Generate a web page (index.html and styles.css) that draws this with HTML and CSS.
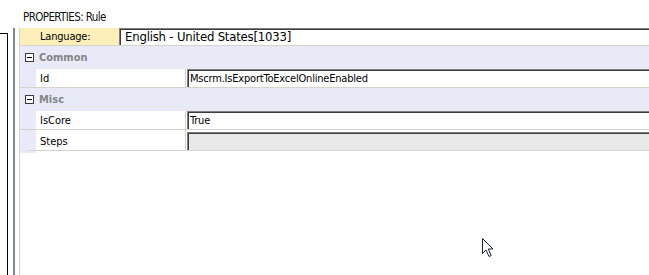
FILE: index.html
```html
<!DOCTYPE html>
<html lang="en">
<head>
    <meta charset="UTF-8">
    <title>Properties: Rule</title>
    <link rel="stylesheet" href="styles.css">
</head>
<body>
    <div class="title">PROPERTIES: Rule</div>
    <div class="main">
        <div class="frame-outer"></div>
        <div class="frame-bar"></div>
        <div class="panel">
            <div class="lang-row">
                <div class="lang-label">Language:</div>
                <div class="lang-value">English - United States[1033]</div>
            </div>

            <div class="cat">
                <span class="toggle"></span>
                <span class="cat-name">Common</span>
            </div>
            <div class="prop">
                <div class="prop-name">Id</div>
                <div class="prop-value">Mscrm.IsExportToExcelOnlineEnabled</div>
            </div>

            <div class="cat">
                <span class="toggle"></span>
                <span class="cat-name">Misc</span>
            </div>
            <div class="prop">
                <div class="prop-name">IsCore</div>
                <div class="prop-value">True</div>
            </div>
            <div class="prop prop-steps">
                <div class="prop-name">Steps</div>
                <div class="prop-value disabled"></div>
            </div>
            <div class="grid-end"></div>
        </div>
    </div>

    <!-- mouse pointer -->
    <svg class="cursor" width="13" height="20" viewBox="0 0 13 20">
        <path d="M0.5 0.5 L0.5 15.5 L4 12 L7 18.5 L9.2 17.5 L6.3 11 L11 11 Z" fill="#fff" stroke="#1c1c3c" stroke-width="1"/>
    </svg>
</body>
</html>
```

FILE: styles.css
```css
* {
    margin: 0;
    padding: 0;
    box-sizing: border-box;
}

body {
    font-family: "DejaVu Sans Condensed", "DejaVu Sans", sans-serif;
    font-stretch: condensed;
    font-size: 11px;
    color: #000;
    background: #fff;
    width: 649px;
    height: 275px;
    overflow: hidden;
    position: relative;
}

.title {
    height: 28px;
    padding: 10px 0 0 23px;
    font-size: 11.5px;
    line-height: 14px;
    letter-spacing: -0.6px;
    color: #111;
}

.main {
    display: flex;
    height: 247px;
}

.frame-outer {
    width: 8px;
    margin-top: 5px;
    border-top: 1px solid #000;
    border-right: 1px solid #000;
}

.frame-bar {
    width: 2px;
    margin-left: 5px;
    margin-right: 4px;
    background: #7c8994;
}

.panel {
    flex: 1;
    min-width: 0;
    border-left: 1px solid #d2d2d2;
}

/* language selector */
.lang-row {
    display: flex;
    height: 18px;
    border-bottom: 1px solid #d6d3cb;
}

.lang-label {
    width: 99px;
    padding-left: 20px;
    line-height: 17px;
    background: #fcefb9;
    letter-spacing: -0.2px;
}

.lang-value {
    flex: 1;
    padding-left: 6px;
    font-size: 13px;
    line-height: 18px;
    letter-spacing: -0.2px;
    background: #fff;
    box-shadow: inset 1px 1px #808080, inset 2px 2px #3c3c3c;
}

/* property grid */
.cat {
    display: flex;
    align-items: center;
    height: 23px;
    background: #e8eaf8;
}

.toggle {
    position: relative;
    width: 9px;
    height: 9px;
    margin-left: 5px;
    border: 1px solid #3a3a3a;
    background: #fff;
}

.toggle::after {
    content: "";
    position: absolute;
    left: 1px;
    top: 3px;
    width: 5px;
    height: 1px;
    background: #000;
}

.cat-name {
    margin-left: 5px;
    font-weight: bold;
    color: #858585;
}

.prop {
    display: flex;
    height: 19px;
    background: #e8eaf8;
    border-bottom: 1px solid #d6d3cb;
}

.prop-name {
    width: 150px;
    margin-left: 16px;
    padding-left: 4px;
    line-height: 19px;
    background: #fff;
    border-right: 1px solid #d6d3cb;
}

.prop-value {
    flex: 1;
    padding-left: 3px;
    line-height: 19px;
    letter-spacing: -0.2px;
    background: #fff;
    border-left: 1px solid #fff;
    box-shadow: inset 1px 1px #808080, inset 2px 2px #3c3c3c;
}

.prop-steps {
    height: 21px;
    background: #fff;
    border-left: 16px solid #e8eaf8;
}

.prop-steps .prop-name {
    margin-left: 0;
    padding-top: 2px;
}

.prop-value.disabled {
    margin-top: 2px;
    background: #e8e8e8;
}

.grid-end {
    width: 16px;
    height: 2px;
    background: #e8eaf8;
}

.cursor {
    position: absolute;
    left: 482px;
    top: 238px;
}
```
